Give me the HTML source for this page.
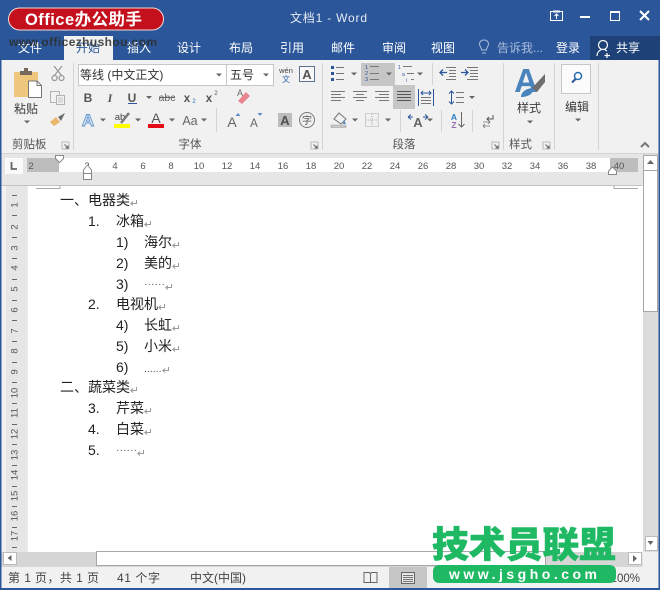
<!DOCTYPE html>
<html><head><meta charset="utf-8"><title>文档1 - Word</title>
<style>
html,body{margin:0;padding:0;background:#fff;width:660px;height:590px;overflow:hidden}
svg{display:block;position:absolute;left:0;top:0}
text{font-family:"Liberation Sans","Noto Sans CJK SC",sans-serif}
.tab{font-size:12px;fill:#fff;text-anchor:middle}
.ui{font-size:12px;fill:#3c3c3c}
.lb{font-size:11px;fill:#555;}
.c{text-anchor:middle}
.d{font-size:14px;fill:#222}
.r{font-size:9.500px;fill:#555;text-anchor:middle}
.arr{fill:#666}
.ln{stroke:#777;stroke-width:1;fill:none}
.sep{stroke:#d4d4d4;stroke-width:1}
.pm{stroke:#999;stroke-width:1;fill:none}
</style></head>
<body>
<svg width="660" height="590" viewBox="0 0 660 590" xmlns="http://www.w3.org/2000/svg">
<defs>
<g id="ar"><path d="M-3 -1.500H3L0 1.500Z" class="arr"/></g>
<g id="pm"><path d="M6.500 -4V-0.500H1M3 -2.500L0.800 -0.500L3 1.500" class="pm"/></g>
<g id="lch"><path d="M0 0H7V7H0Z" fill="none" stroke="#aaa" stroke-width=".8"/><path d="M2.500 2.500L6 6M6 3.500V6H3.500" fill="none" stroke="#666" stroke-width="1"/></g>
</defs>
<!-- Window base -->
<rect width="660" height="590" fill="#f1f1f1"/>
<rect width="660" height="60" fill="#2b579a"/>
<rect x="0" y="0" width="1.500" height="590" fill="#2b579a"/>
<rect x="658.500" y="0" width="1.500" height="590" fill="#2b579a"/>
<rect x="0" y="588" width="660" height="2" fill="#2b579a"/>

<!-- Title -->
<text x="290" y="22" font-size="12" fill="#e6ebf3" textLength="77">文档1 - Word</text>
<g stroke="#fff" fill="none">
<rect x="550.500" y="11.500" width="12" height="9"/><path d="M553 11.500H560" stroke-width="2"/><path d="M556.500 19V14M554.500 16L556.500 14L558.500 16"/>
<path d="M580 17H590" stroke-width="2"/>
<rect x="610.500" y="11.500" width="9" height="9"/><path d="M610 12H620" stroke-width="2"/>
<path d="M640 11L649 20M649 11L640 20" stroke-width="2"/>
</g>

<!-- Tabs -->
<rect x="64" y="36" width="49" height="24" fill="#f1f1f1"/>
<rect x="590" y="36" width="70" height="24" fill="#1e4278"/>
<text class="tab" x="30" y="52">文件</text>
<text class="tab" x="88" y="52" style="fill:#2b579a">开始</text>
<text class="tab" x="139" y="52">插入</text>
<text class="tab" x="189" y="52">设计</text>
<text class="tab" x="241" y="52">布局</text>
<text class="tab" x="292" y="52">引用</text>
<text class="tab" x="343" y="52">邮件</text>
<text class="tab" x="394" y="52">审阅</text>
<text class="tab" x="443" y="52">视图</text>
<g fill="none" stroke="#a9bcdc"><path d="M481.500 50C481.500 47 479.500 46.500 479.500 44C479.500 41.500 481.500 40 484 40C486.500 40 488.500 41.500 488.500 44C488.500 46.500 486.500 47 486.500 50ZM482 53H486"/></g>
<text x="497" y="52" font-size="12" fill="#a9bcdc">告诉我...</text>
<text class="tab" x="568" y="52">登录</text>
<g fill="none" stroke="#fff" stroke-width="1.200"><circle cx="603" cy="45" r="4.500"/><path d="M597 56C597 52 599 50.500 601.500 49.500M604.500 49.500L607 51M607 53V58M604.500 55.500H610"/></g>
<text class="tab" x="628" y="52">共享</text>

<!-- Logo watermark -->
<rect x="8.500" y="8" width="155" height="22" rx="11" fill="#c4101c" stroke="#f3d8d8" stroke-width="1"/>
<text x="25" y="25" font-size="16.500" font-weight="700" fill="#fff" textLength="117">Office办公助手</text>
<text x="9" y="46" font-size="12" font-weight="700" fill="#2d2d2d" fill-opacity=".85" textLength="148">www.officezhushou.com</text>

<!-- Clipboard group -->
<rect x="14" y="72" width="24" height="25" fill="#eec67c"/>
<path d="M20 75V71H24V68H28V71H32V75Z" fill="#77695c"/>
<path d="M28.500 81H37L41.500 85.500V97.500H28.500Z" fill="#fff" stroke="#777"/>
<path d="M37 81V85.500H41.500" fill="none" stroke="#777"/>
<text class="ui c" x="26" y="113">粘贴</text>
<use href="#ar" x="27" y="122"/>
<g fill="none" stroke="#9a9a9a" stroke-width="1.300"><path d="M54 66L62 76M62 66L54 76"/><circle cx="54.500" cy="78" r="2.500"/><circle cx="61.500" cy="78" r="2.500"/></g>
<g fill="#f1f1f1" stroke="#b2b2b2"><rect x="50.500" y="91.500" width="9" height="11"/><rect x="56.500" y="95.500" width="8" height="9"/><path d="M58 98H63M58 100H63M58 102H63" stroke-width=".7"/></g>
<path d="M50 122L56 117L60 122L54 126Z" fill="#e9b66b"/><path d="M58 117L65 113L61 121Z" fill="#6d6d6d"/>
<text class="lb" x="12" y="148" style="font-size:11.500px">剪贴板</text>
<use href="#lch" x="62" y="142"/>
<line class="sep" x1="73.500" y1="63" x2="73.500" y2="150"/>

<!-- Font group -->
<rect x="78.500" y="64.500" width="148" height="21" fill="#fff" stroke="#c6c6c6"/>
<rect x="226.500" y="64.500" width="47" height="21" fill="#fff" stroke="#c6c6c6"/>
<text x="80" y="79" font-size="12" fill="#333">等线 (中文正文)</text>
<use href="#ar" x="219" y="75"/>
<text x="230" y="79" font-size="12" fill="#333">五号</text>
<use href="#ar" x="266" y="75"/>
<text x="286" y="73" font-size="7.500" fill="#444" class="c">wén</text>
<text x="286" y="82" font-size="8" fill="#2b6cb0" class="c">文</text>
<rect x="299.500" y="66.500" width="15" height="15" fill="#f8f8f8" stroke="#5d7391"/>
<text x="307" y="79" font-size="13" font-weight="700" fill="#555" class="c">A</text>

<text x="88" y="102" font-size="12" font-weight="700" fill="#555" class="c">B</text>
<text x="110" y="102" font-size="12" font-style="italic" font-weight="700" fill="#555" class="c" style="font-family:'Liberation Serif',serif">I</text>
<text x="132" y="102" font-size="12" font-weight="700" fill="#555" class="c">U</text>
<line x1="128" y1="103.500" x2="137" y2="103.500" stroke="#2b579a"/>
<use href="#ar" x="149" y="97.500"/>
<text x="167" y="101" font-size="10.500" fill="#666" class="c">abc</text>
<line x1="159" y1="97.500" x2="175" y2="97.500" stroke="#666"/>
<text x="187" y="102" font-size="11.500" font-weight="700" fill="#555" class="c">x</text>
<text x="194" y="103" font-size="6" fill="#2b6cb0" class="c">2</text>
<text x="209" y="102" font-size="11.500" font-weight="700" fill="#555" class="c">x</text>
<text x="216" y="95" font-size="6" fill="#555" class="c">2</text>
<text x="240" y="96" font-size="9" fill="#666" class="c">A</text>
<path d="M238 101L246 92L250 96L242 104Z" fill="#e8868f"/>

<text x="88" y="126" font-size="17" font-weight="700" fill="#d9e6f4" stroke="#5f93ca" stroke-width=".9" class="c">A</text>
<use href="#ar" x="103" y="120"/>
<text x="120" y="120" font-size="9.500" fill="#444" class="c">ab</text>
<path d="M121 123L129 113" stroke="#7a7a7a" stroke-width="2.500"/>
<rect x="114" y="124" width="16" height="4" fill="#ffff00"/>
<use href="#ar" x="138" y="120"/>
<text x="156" y="123" font-size="14" fill="#555" class="c">A</text>
<rect x="148" y="124" width="16" height="4" fill="#e50e18"/>
<use href="#ar" x="172" y="120"/>
<text x="190" y="125" font-size="12.500" fill="#666" class="c">Aa</text>
<use href="#ar" x="204" y="120"/>
<line class="sep" x1="216.500" y1="108" x2="216.500" y2="132"/>
<text x="232" y="127" font-size="14" fill="#666" class="c">A</text>
<path d="M235.500 116L238 113L240.500 116Z" fill="#5b8fc7"/>
<text x="254" y="127" font-size="11.500" fill="#666" class="c">A</text>
<path d="M257.500 113H262.500L260 116Z" fill="#5b8fc7"/>
<rect x="278" y="113" width="14" height="14" fill="#bcbcbc"/>
<text x="285" y="125" font-size="13" font-weight="700" fill="#4e4e4e" class="c">A</text>
<circle cx="307" cy="120" r="7.500" fill="none" stroke="#777"/>
<text x="307" y="124" font-size="10" fill="#555" class="c">字</text>
<text class="lb c" x="190" y="148" style="font-size:11.500px">字体</text>
<use href="#lch" x="311" y="142"/>
<line class="sep" x1="322.500" y1="63" x2="322.500" y2="150"/>

<!-- Paragraph group -->
<rect x="361" y="63" width="34" height="23" fill="#c6c6c6"/>
<rect x="393" y="85" width="22" height="24" fill="#c6c6c6"/>
<g fill="#2b579a"><rect x="331" y="66" width="3" height="3"/><rect x="331" y="72" width="3" height="3"/><rect x="331" y="78" width="3" height="3"/></g>
<path d="M336 67.500H344M336 73.500H344M336 79.500H344" class="ln"/>
<use href="#ar" x="354" y="74"/>
<g font-size="5.500" fill="#2b579a"><text x="365" y="69">1</text><text x="365" y="75">2</text><text x="365" y="81">3</text></g>
<path d="M370 66.500H379M370 73.500H379M370 79.500H379" class="ln"/>
<use href="#ar" x="389" y="74"/>
<g font-size="5" fill="#2b579a"><text x="398" y="69">1</text><text x="402" y="76">a</text><text x="406" y="82">i</text></g>
<path d="M403 66.500H412M407 73.500H414M411 79.500H414" class="ln"/>
<use href="#ar" x="420" y="74"/>
<line class="sep" x1="432.500" y1="63" x2="432.500" y2="85"/>
<path d="M440 72.500H447M443 69.500L440 72.500L443 75.500" fill="none" stroke="#2b579a" stroke-width="1.300"/>
<path d="M446 67.500H456M449 70.500H456M449 73.500H456M449 76.500H456M446 79.500H456" class="ln"/>
<path d="M461 72.500H468M465 69.500L468 72.500L465 75.500" fill="none" stroke="#2b579a" stroke-width="1.300"/>
<path d="M467 67.500H478M470 70.500H478M470 73.500H478M470 76.500H478M467 79.500H478" class="ln"/>

<path d="M331 91.500H345M331 94.500H341M331 97.500H345M331 100.500H341" class="ln"/>
<path d="M353 91.500H367M356 94.500H364M353 97.500H367M356 100.500H364" class="ln"/>
<path d="M375 91.500H389M379 94.500H389M375 97.500H389M379 100.500H389" class="ln"/>
<path d="M397 91.500H411M397 94.500H411M397 97.500H411M397 100.500H411" stroke="#555" fill="none"/>
<path d="M418.500 89V106M433.500 89V106M421 93H431M423 91L421 93L423 95M429 91L431 93L429 95" fill="none" stroke="#2b579a"/>
<path d="M421 97.500H431M421 100.500H431M421 103.500H431" class="ln"/>
<path d="M451.500 91V104M449 93.500L451.500 91L454 93.500M449 101.500L451.500 104L454 101.500" fill="none" stroke="#2b579a"/>
<path d="M456 92.500H464M456 97.500H464M456 102.500H464" class="ln"/>
<use href="#ar" x="472" y="97.500"/>

<path d="M334 119L339 113L346 119L341 124Z" fill="#f1f1f1" stroke="#777"/>
<path d="M344 120L346 124H343Z" fill="#4d8ac5"/>
<rect x="331" y="125" width="15" height="2.500" fill="#c9c9c9" stroke="#999" stroke-width=".5"/>
<use href="#ar" x="355" y="120"/>
<rect x="365.500" y="113.500" width="13" height="13" fill="none" stroke="#aaa" stroke-dasharray="1 1"/>
<path d="M372 114V126M366 120H378" stroke="#aaa" stroke-dasharray="1 1"/>
<use href="#ar" x="388" y="120"/>
<line class="sep" x1="400.500" y1="110" x2="400.500" y2="132"/>
<text x="418" y="127" font-size="13" font-weight="700" fill="#666" class="c">A</text>
<path d="M408 117L411 114.500M408 117L411 119.500M408 117H413M423 117H428M428 117L425 114.500M428 117L425 119.500" fill="none" stroke="#2b579a"/>
<use href="#ar" x="430" y="120"/>
<line class="sep" x1="441.500" y1="110" x2="441.500" y2="132"/>
<text x="454" y="120" font-size="8.500" font-weight="700" fill="#2b7bbd" class="c">A</text>
<text x="454" y="128" font-size="8.500" font-weight="700" fill="#9a6fb0" class="c">Z</text>
<path d="M461.500 112V127M458.500 124L461.500 127L464.500 124" fill="none" stroke="#666"/>
<line class="sep" x1="472.500" y1="110" x2="472.500" y2="132"/>
<path d="M493 115V119H487M489 117L487 119L489 121" fill="none" stroke="#555"/>
<path d="M483 122H490M488 120L490 122L488 124M490 126H483M485 124L483 126L485 128" fill="none" stroke="#777" stroke-width=".8"/>
<text class="lb c" x="404" y="148" style="font-size:11.500px">段落</text>
<use href="#lch" x="492" y="142"/>
<line class="sep" x1="503.500" y1="63" x2="503.500" y2="150"/>

<!-- Styles -->
<text x="526" y="92" font-size="33" font-weight="700" fill="#4a84bd" class="c">A</text>
<path d="M532 88L545 74V82L537 92Z" fill="#6e6e6e"/>
<path d="M521 97C521 91 528 88 533 88C534 93 529 97 521 97Z" fill="#4a84bd"/>
<text class="ui c" x="529" y="112">样式</text>
<use href="#ar" x="530" y="122"/>
<text class="lb" x="509" y="148" style="font-size:11.500px">样式</text>
<use href="#lch" x="543" y="142"/>
<line class="sep" x1="554.500" y1="63" x2="554.500" y2="150"/>

<!-- Editing -->
<rect x="561.500" y="64.500" width="29" height="29" fill="#fbfbfb" stroke="#c6c6c6"/>
<circle cx="578" cy="76" r="3.500" fill="#fff" stroke="#2b6cb0" stroke-width="1.500"/>
<path d="M575.500 79L572 82.500" stroke="#2b579a" stroke-width="2"/>
<text class="ui c" x="577" y="111">编辑</text>
<use href="#ar" x="578" y="120"/>
<line class="sep" x1="598.500" y1="63" x2="598.500" y2="150"/>
<path d="M641 147L645 143L649 147" fill="none" stroke="#777" stroke-width="2"/>

<!-- Ruler band -->
<rect x="1.500" y="153" width="657" height="33" fill="#e6e6e6"/>
<rect x="1.500" y="153" width="657" height="1" fill="#d4d4d4"/>
<rect x="5" y="158" width="18" height="16" fill="#fafafa"/>
<path d="M11.500 162V169H17" fill="none" stroke="#666" stroke-width="1.800"/>
<rect x="27" y="158" width="32" height="14" fill="#bdbdbd"/>
<rect x="59" y="158" width="551" height="14" fill="#fff"/>
<rect x="610" y="158" width="28" height="14" fill="#bdbdbd"/>
<line x1="1.500" y1="185.500" x2="642" y2="185.500" stroke="#c2c2c2"/>
<g>
<text class="r" x="31" y="169">2</text>
<text class="r" x="87" y="169">2</text><text class="r" x="115" y="169">4</text><text class="r" x="143" y="169">6</text><text class="r" x="171" y="169">8</text><text class="r" x="199" y="169">10</text><text class="r" x="227" y="169">12</text><text class="r" x="255" y="169">14</text><text class="r" x="283" y="169">16</text><text class="r" x="311" y="169">18</text><text class="r" x="339" y="169">20</text><text class="r" x="367" y="169">22</text><text class="r" x="395" y="169">24</text><text class="r" x="423" y="169">26</text><text class="r" x="451" y="169">28</text><text class="r" x="479" y="169">30</text><text class="r" x="507" y="169">32</text><text class="r" x="535" y="169">34</text><text class="r" x="563" y="169">36</text><text class="r" x="591" y="169">38</text><text class="r" x="619" y="169">40</text>
</g>
<path d="M55.500 155.500H63.500V158.500L59.500 162.500L55.500 158.500Z" fill="#fff" stroke="#888"/>
<path d="M87.500 165L91.500 170V179.500H83.500V170Z" fill="#fff" stroke="#888"/>
<line x1="83.500" y1="173.500" x2="91.500" y2="173.500" stroke="#888"/>
<path d="M612.500 167L616.500 171V174.500H608.500V171Z" fill="#fff" stroke="#888"/>

<!-- Document area -->
<rect x="1.500" y="186" width="641.500" height="366" fill="#f1f1f1"/>
<rect x="6" y="186" width="21.500" height="366" fill="#e6e6e6"/>
<rect x="28" y="186" width="615" height="366" fill="#fff"/>
<path d="M36 188.500H60V186M614 186V188.500H638" fill="none" stroke="#aaa"/>

<!-- Vertical ruler -->
<g fill="#555" font-size="9.500" text-anchor="middle">
<text transform="translate(17.500 205) rotate(-90)">1</text>
<text transform="translate(17.500 227) rotate(-90)">2</text>
<text transform="translate(17.500 248) rotate(-90)">3</text>
<text transform="translate(17.500 268) rotate(-90)">4</text>
<text transform="translate(17.500 289) rotate(-90)">5</text>
<text transform="translate(17.500 310) rotate(-90)">6</text>
<text transform="translate(17.500 331) rotate(-90)">7</text>
<text transform="translate(17.500 351) rotate(-90)">8</text>
<text transform="translate(17.500 372) rotate(-90)">9</text>
<text transform="translate(17.500 393) rotate(-90)">10</text>
<text transform="translate(17.500 413) rotate(-90)">11</text>
<text transform="translate(17.500 434) rotate(-90)">12</text>
<text transform="translate(17.500 455) rotate(-90)">13</text>
<text transform="translate(17.500 475) rotate(-90)">14</text>
<text transform="translate(17.500 496) rotate(-90)">15</text>
<text transform="translate(17.500 516) rotate(-90)">16</text>
<text transform="translate(17.500 536) rotate(-90)">17</text>
</g>
<path d="M12 195.500H17M12 215.500H17M12 237.500H17M12 258.500H17M12 279.500H17M12 300.500H17M12 320.500H17M12 341.500H17M12 362.500H17M12 382.500H17M12 403.500H17M12 424.500H17M12 444.500H17M12 465.500H17M12 486.500H17M12 506.500H17M12 527.500H17M12 547.500H17" stroke="#666" fill="none"/>

<!-- Document text -->
<text class="d" x="60" y="205">一、电器类</text><use href="#pm" x="130" y="204"/>
<text class="d" x="88" y="226">1.</text><text class="d" x="116" y="226">冰箱</text><use href="#pm" x="144" y="225"/>
<text class="d" x="116" y="247">1)</text><text class="d" x="144" y="247">海尔</text><use href="#pm" x="172" y="246"/>
<text class="d" x="116" y="268">2)</text><text class="d" x="144" y="268">美的</text><use href="#pm" x="172" y="267"/>
<text class="d" x="116" y="289">3)</text><text class="d" x="144" y="287" style="font-size:10.500px;fill:#555">······</text><use href="#pm" x="165" y="288"/>
<text class="d" x="88" y="309">2.</text><text class="d" x="116" y="309">电视机</text><use href="#pm" x="158" y="308"/>
<text class="d" x="116" y="330">4)</text><text class="d" x="144" y="330">长虹</text><use href="#pm" x="172" y="329"/>
<text class="d" x="116" y="351">5)</text><text class="d" x="144" y="351">小米</text><use href="#pm" x="172" y="350"/>
<text class="d" x="116" y="372">6)</text><text class="d" x="144" y="372" style="font-size:10.500px;fill:#444">......</text><use href="#pm" x="162" y="371"/>
<text class="d" x="60" y="392">二、蔬菜类</text><use href="#pm" x="130" y="391"/>
<text class="d" x="88" y="413">3.</text><text class="d" x="116" y="413">芹菜</text><use href="#pm" x="144" y="412"/>
<text class="d" x="88" y="434">4.</text><text class="d" x="116" y="434">白菜</text><use href="#pm" x="144" y="433"/>
<text class="d" x="88" y="455">5.</text><text class="d" x="116" y="453" style="font-size:10.500px;fill:#555">······</text><use href="#pm" x="137" y="454"/>

<!-- Vertical scrollbar -->
<rect x="643" y="154" width="15.500" height="398" fill="#dcdcdc"/>
<rect x="643.500" y="155.500" width="14" height="15" fill="#fff" stroke="#a6a6a6"/>
<rect x="643.500" y="170.500" width="14" height="141" fill="#fff" stroke="#a6a6a6"/>
<path d="M647 164L650.500 160L654 164Z" fill="#666"/>
<rect x="645.500" y="536.500" width="12" height="14" fill="#fff" stroke="#bbb"/>
<path d="M647.500 541H653.500L650.500 545Z" fill="#666"/>

<!-- Horizontal scrollbar -->
<rect x="1.500" y="552" width="641" height="15" fill="#d6d6d6"/>
<rect x="96.500" y="551.500" width="449" height="14" fill="#fff" stroke="#a6a6a6"/>
<rect x="3.500" y="552.500" width="13" height="12" fill="#fff" stroke="#bbb"/>
<path d="M11.500 555V561L7.500 558Z" fill="#666"/>
<rect x="628.500" y="552.500" width="13" height="12" fill="#fff" stroke="#bbb"/>
<path d="M633 555V562L637 558.500Z" fill="#666"/>

<!-- Status bar -->
<rect x="1.500" y="567" width="657" height="21" fill="#f1f1f1"/>
<text x="8" y="582" font-size="12" fill="#444" textLength="91">第 1 页，共 1 页</text>
<text x="117" y="582" font-size="12" fill="#444" textLength="43">41 个字</text>
<text x="190" y="582" font-size="12" fill="#444" textLength="56">中文(中国)</text>
<path d="M364 572.500H369.500L370.500 574L371.500 572.500H377V582.500H364ZM370.500 574V582" fill="none" stroke="#666"/>
<rect x="389" y="567" width="38" height="21" fill="#c6c6c6"/>
<rect x="401.500" y="572.500" width="13" height="11" fill="#e6e6e6" stroke="#666"/>
<path d="M403 575.500H413M403 577.500H413M403 579.500H413M403 581.500H413" stroke="#777" fill="none"/>
<text x="640" y="582" font-size="11.500" fill="#444" text-anchor="end">100%</text>

<!-- Green watermark -->
<text x="432" y="557" font-size="36" font-weight="900" fill="#1fb964" textLength="184" lengthAdjust="spacingAndGlyphs" stroke="#1fb964" stroke-width=".6">技术员联盟</text>
<rect x="433" y="565" width="183" height="18" rx="6" fill="#1fb964"/>
<text x="449" y="579" font-size="14" font-weight="700" fill="#fff" textLength="148">www.jsgho.com</text>
</svg>
</body></html>
